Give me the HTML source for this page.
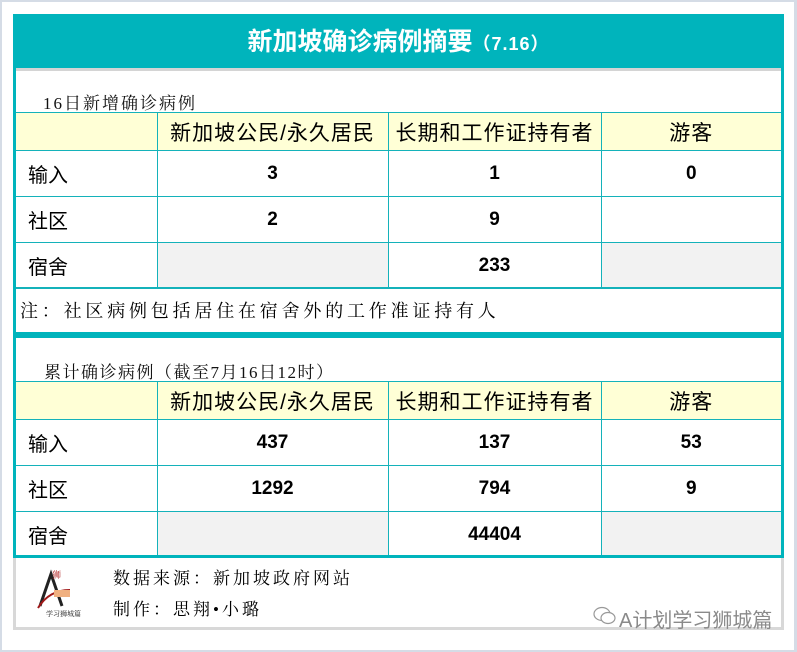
<!DOCTYPE html>
<html><head><meta charset="utf-8"><style>
*{margin:0;padding:0;box-sizing:border-box}
body{width:797px;height:652px;position:relative;background:#fff;overflow:hidden;font-family:"Liberation Sans","Noto Sans CJK SC",sans-serif;color:#000}
.frame{position:absolute;left:0;top:0;width:797px;height:652px;border:2px solid #d5dce6;border-right-width:3px}
.abs{position:absolute}
.hd{left:13px;top:14px;width:771px;height:54px;background:#00b4bc;color:#fff;text-align:center;font-weight:bold;font-size:25px;line-height:56px;padding-left:0}
.hd small{font-size:18px;font-weight:bold;letter-spacing:1px}
.box{left:13px;top:68px;width:771px;height:490px;border:3px solid #00b4bc;border-top:none;background:#fff}
.gl{left:16px;top:68px;width:765px;height:3px;background:#d4d4d4}
.ttl{font-family:"Liberation Serif","Noto Serif CJK SC",serif;font-size:17px;letter-spacing:2px;color:#111}
table{position:absolute;left:16px;border-collapse:collapse;width:765px}
td{border:1px solid #14b2ba;font-size:20px;height:46px;text-align:center}
tr.h td{background:#ffffd6;height:38px;font-size:21px;letter-spacing:1px}
td.l{text-align:left;padding-left:12px}
td.n{font-weight:bold;font-size:19px}
td.g{background:#f2f2f2}
tr.r2 td,tr.r3 td{border-top-color:#d8d8d8}
td:first-child{border-left:none}td:last-child{border-right:none}
.band{left:16px;top:332px;width:765px;height:6px;background:#00b4bc}
.note{left:16px;top:287px;width:765px;height:45px;border-top:2px solid #14b2ba;font-family:"Liberation Serif","Noto Serif CJK SC",serif;font-size:18px;letter-spacing:3.8px;line-height:45px;padding-left:4px}
.ft{left:13px;top:558px;width:771px;height:72px;border:3px solid #d8d8d8;border-top:none;background:#fff}
.bl{left:13px;top:555px;width:771px;height:3px;background:#00b4bc}
.fs{font-family:"Liberation Serif","Noto Serif CJK SC",serif;font-size:17px;letter-spacing:3px}
</style></head><body>
<div class="frame"></div>
<div class="abs hd">新加坡确诊病例摘要<small>（7.16）</small></div>
<div class="abs box"></div>
<div class="abs gl"></div>
<div class="abs ttl" style="left:43px;top:89px">16日新增确诊病例</div>
<table style="top:112px">
<tr class="h"><td style="width:141px"></td><td style="width:231px">新加坡公民/永久居民</td><td style="width:213px">长期和工作证持有者</td><td>游客</td></tr>
<tr><td class="l">输入</td><td class="n">3</td><td class="n">1</td><td class="n">0</td></tr>
<tr class="r2"><td class="l">社区</td><td class="n">2</td><td class="n">9</td><td></td></tr>
<tr class="r3"><td class="l" style="height:45px">宿舍</td><td class="g"></td><td class="n">233</td><td class="g"></td></tr>
</table>
<div class="abs note">注：社区病例包括居住在宿舍外的工作准证持有人</div>
<div class="abs band"></div>
<div class="abs ttl" style="left:44px;top:358px;letter-spacing:1.5px">累计确诊病例（截至7月16日12时）</div>
<table style="top:381px">
<tr class="h"><td style="width:141px"></td><td style="width:231px">新加坡公民/永久居民</td><td style="width:213px">长期和工作证持有者</td><td>游客</td></tr>
<tr><td class="l">输入</td><td class="n">437</td><td class="n">137</td><td class="n">53</td></tr>
<tr class="r2"><td class="l">社区</td><td class="n">1292</td><td class="n">794</td><td class="n">9</td></tr>
<tr class="r3"><td class="l" style="height:44px">宿舍</td><td class="g"></td><td class="n">44404</td><td class="g"></td></tr>
</table>
<div class="abs bl"></div>
<div class="abs ft"></div>
<svg class="abs" style="left:34px;top:568px" width="60" height="50" viewBox="0 0 60 50">
<path d="M6 38 L17 6 L28 38" fill="none" stroke="#222" stroke-width="3"/>
<path d="M4 40 Q15 22 36 22" fill="none" stroke="#a01818" stroke-width="2"/>
<rect x="20" y="22" width="16" height="7" fill="#f0b080"/>
<text x="18" y="10" font-size="9" fill="#b02020" font-family="Noto Serif CJK SC,serif">狮</text>
<text x="12" y="48" font-size="7" fill="#222" font-family="Noto Serif CJK SC,serif">学习狮城篇</text>
</svg>
<div class="abs fs" style="left:113px;top:564px">数据来源：新加坡政府网站</div>
<div class="abs fs" style="left:113px;top:595px">制作：思翔•小璐</div>
<svg class="abs" style="left:593px;top:605px" width="24" height="22" viewBox="0 0 24 22"><ellipse cx="9" cy="9" rx="8" ry="6.5" fill="none" stroke="#999" stroke-width="1.2"/><ellipse cx="15" cy="13" rx="7" ry="5.5" fill="#fff" stroke="#999" stroke-width="1.2"/></svg>
<div class="abs" style="left:619px;top:604px;font-size:20px;color:#8a8a8a">A计划学习狮城篇</div>
</body></html>
